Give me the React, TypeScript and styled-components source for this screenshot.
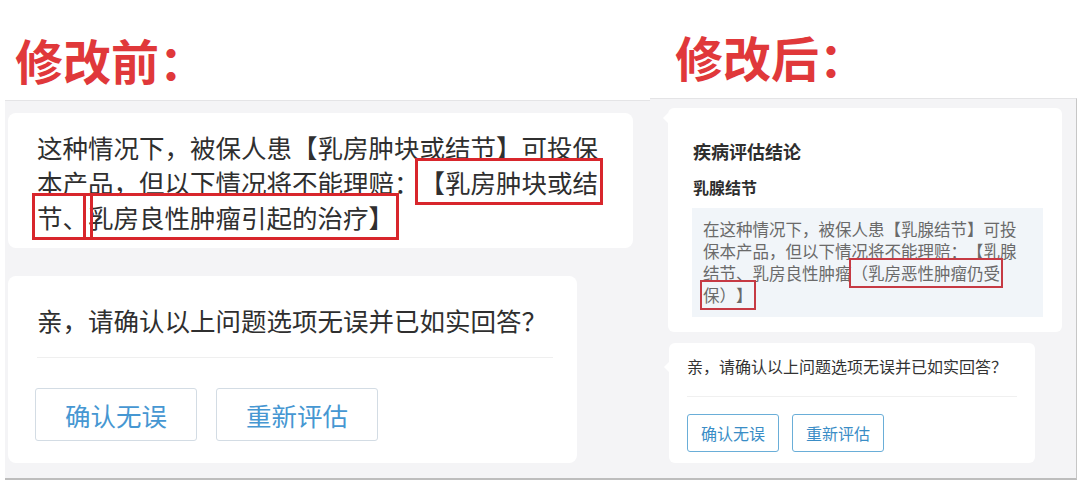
import React from "react";
import styled, { createGlobalStyle } from "styled-components";

const GlobalStyle = createGlobalStyle`
  html, body {
    margin: 0;
    padding: 0;
    background: #ffffff;
  }
  body {
    font-family: "Noto Sans CJK SC", "Noto Sans", sans-serif;
    text-spacing-trim: space-all;
  }
`;

const Page = styled.div`
  display: flex;
  height: 480px;
  width: 1080px;
  padding-left: 5px;
  box-sizing: border-box;
  background: #ffffff;
`;

const Column = styled.div<{ $w: number }>`
  display: flex;
  flex-direction: column;
  width: ${(p) => p.$w}px;
  flex: none;
`;

const Title = styled.div<{ $top: number; $left: number; $gap: number }>`
  font-size: 48px;
  line-height: 58px;
  font-weight: 700;
  color: #e0383a;
  padding-top: ${(p) => p.$top}px;
  padding-left: ${(p) => p.$left}px;
  margin-bottom: ${(p) => p.$gap}px;
  white-space: nowrap;
`;

const Panel = styled.div<{ $pad: string; $edge?: boolean }>`
  flex: 1;
  display: flex;
  flex-direction: column;
  align-items: flex-start;
  background: #f4f4f6;
  border-top: 1px solid #e4e4e6;
  border-bottom: 2px solid #bdbdbd;
  border-right: ${(p) => (p.$edge ? "1px solid #c6c6c6" : "none")};
  padding: ${(p) => p.$pad};
  box-sizing: border-box;
`;

const BigCard = styled.div<{ $w: number; $pad: string; $mt?: number }>`
  width: ${(p) => p.$w}px;
  box-sizing: border-box;
  padding: ${(p) => p.$pad};
  margin-top: ${(p) => p.$mt ?? 0}px;
  background: #ffffff;
  border-radius: 8px;
`;

const BigText = styled.div`
  font-size: 25.5px;
  line-height: 35px;
  color: #2f2f2f;
`;

const BigMark = styled.span`
  outline: 3px solid #d8262c;
  outline-offset: 2px;
`;

const BigDivider = styled.div`
  height: 1px;
  background: #efefef;
  margin: 20px 0 30px;
`;

const ButtonRow = styled.div<{ $gap: number }>`
  display: flex;
  gap: ${(p) => p.$gap}px;
`;

const BigButton = styled.button`
  width: 162px;
  height: 53px;
  margin-left: -2px;
  margin-right: 2px;
  background: #ffffff;
  border: 1px solid #d3dce4;
  border-radius: 3px;
  font-family: inherit;
  font-size: 25.5px;
  color: #4697d2;
  padding: 0;
`;

const Bubble = styled.div<{ $w: number; $pad: string; $mt?: number; $ml?: number; $tail: number }>`
  position: relative;
  width: ${(p) => p.$w}px;
  box-sizing: border-box;
  padding: ${(p) => p.$pad};
  margin-top: ${(p) => p.$mt ?? 0}px;
  margin-left: ${(p) => p.$ml ?? 0}px;
  background: #ffffff;
  border-radius: 6px;
  &::before {
    content: "";
    position: absolute;
    left: -5px;
    top: ${(p) => p.$tail}px;
    border-top: 5px solid transparent;
    border-bottom: 5px solid transparent;
    border-right: 5px solid #ffffff;
  }
`;

const CardTitle = styled.div`
  font-size: 18px;
  line-height: 26px;
  font-weight: 600;
  color: #2e2e2e;
  margin-left: 1px;
`;

const CardSub = styled.div`
  font-size: 16px;
  line-height: 24px;
  font-weight: 700;
  color: #2e2e2e;
  margin: 11px 0 9px 1px;
`;

const Conclusion = styled.div`
  background: #f1f5f9;
  padding: 10px 20px 11px 11px;
  font-size: 16.5px;
  line-height: 22px;
  color: #6a6a6a;
`;

const SmallMark = styled.span`
  outline: 2px solid #c63a44;
  outline-offset: 1px;
`;

const SmallText = styled.div`
  font-size: 16px;
  line-height: 22px;
  color: #333333;
`;

const SmallDivider = styled.div`
  height: 1px;
  background: #f0f0f0;
  margin: 19px 0 17px;
`;

const SmallButton = styled.button`
  height: 38px;
  padding: 0 13px;
  background: #ffffff;
  border: 1.5px solid #6aaed8;
  border-radius: 3px;
  font-family: inherit;
  font-size: 16px;
  color: #3a8dc6;
`;

export default function App() {
  return (
    <>
      <GlobalStyle />
      <Page>
        <Column $w={645}>
          <Title $top={30} $left={10} $gap={12}>
            修改前：
          </Title>
          <Panel $pad="12px 0 0 3px">
            <BigCard $w={625} $pad="16px 30px 14px 29px">
              <BigText>
                这种情况下，被保人患【乳房肿块或结节】可投保本产品，但以下情况将不能理赔：
                <BigMark>【乳房肿块或结</BigMark>
                <BigMark>节、</BigMark>
                <BigMark>乳房良性肿瘤引起的治疗】</BigMark>
              </BigText>
            </BigCard>
            <BigCard $w={569} $pad="26px 24px 22px 29px" $mt={28}>
              <BigText>亲，请确认以上问题选项无误并已如实回答？</BigText>
              <BigDivider />
              <ButtonRow $gap={19}>
                <BigButton>确认无误</BigButton>
                <BigButton>重新评估</BigButton>
              </ButtonRow>
            </BigCard>
          </Panel>
        </Column>
        <Column $w={427}>
          <Title $top={27} $left={25} $gap={13}>
            修改后：
          </Title>
          <Panel $pad="9px 14px 0 18px" $edge>
            <Bubble $w={394} $pad="30px 19px 15px 24px" $tail={5}>
              <CardTitle>疾病评估结论</CardTitle>
              <CardSub>乳腺结节</CardSub>
              <Conclusion>
                在这种情况下，被保人患【乳腺结节】可投保本产品，但以下情况将不能理赔：【乳腺结节、乳房良性肿瘤
                <SmallMark>（乳房恶性肿瘤仍受</SmallMark>
                <SmallMark>保）】</SmallMark>
              </Conclusion>
            </Bubble>
            <Bubble $w={366} $pad="12px 18px 11px 18px" $mt={11} $ml={1} $tail={19}>
              <SmallText>亲，请确认以上问题选项无误并已如实回答？</SmallText>
              <SmallDivider />
              <ButtonRow $gap={13}>
                <SmallButton>确认无误</SmallButton>
                <SmallButton>重新评估</SmallButton>
              </ButtonRow>
            </Bubble>
          </Panel>
        </Column>
      </Page>
    </>
  );
}
